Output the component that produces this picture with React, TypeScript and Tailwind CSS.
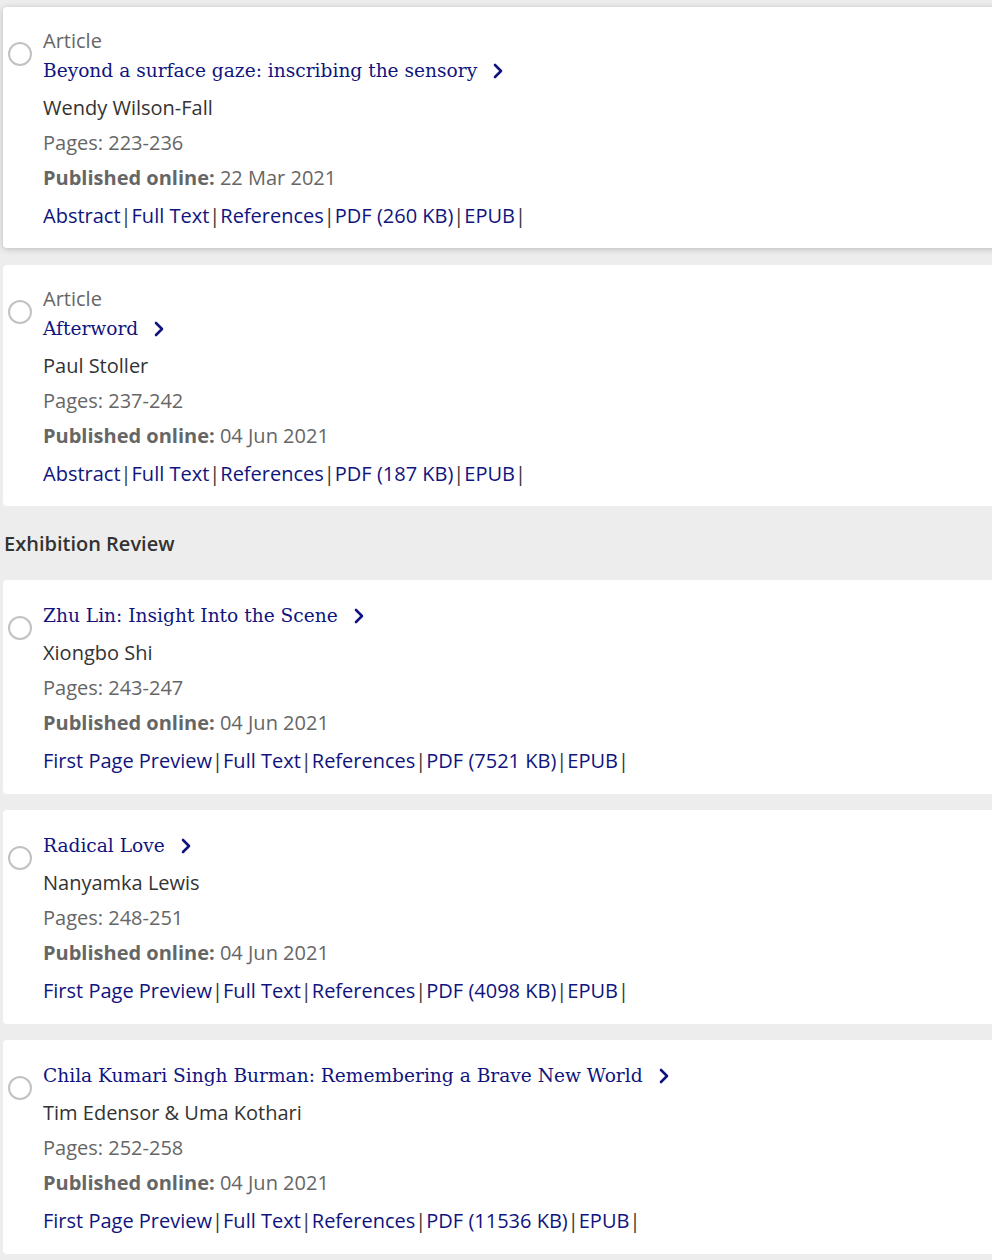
import { ChevronRight } from 'lucide-react';

type Item = {
    kind?: string;
    title: string;
    authors: string;
    pages: string;
    date: string;
    links: string[];
    raised?: boolean;
};

const articles: Item[] = [
    {
        kind: 'Article',
        title: 'Beyond a surface gaze: inscribing the sensory',
        authors: 'Wendy Wilson-Fall',
        pages: '223-236',
        date: '22 Mar 2021',
        links: ['Abstract', 'Full Text', 'References', 'PDF (260 KB)', 'EPUB'],
        raised: true,
    },
    {
        kind: 'Article',
        title: 'Afterword',
        authors: 'Paul Stoller',
        pages: '237-242',
        date: '04 Jun 2021',
        links: ['Abstract', 'Full Text', 'References', 'PDF (187 KB)', 'EPUB'],
    },
];

const reviews: Item[] = [
    {
        title: 'Zhu Lin: Insight Into the Scene',
        authors: 'Xiongbo Shi',
        pages: '243-247',
        date: '04 Jun 2021',
        links: ['First Page Preview', 'Full Text', 'References', 'PDF (7521 KB)', 'EPUB'],
    },
    {
        title: 'Radical Love',
        authors: 'Nanyamka Lewis',
        pages: '248-251',
        date: '04 Jun 2021',
        links: ['First Page Preview', 'Full Text', 'References', 'PDF (4098 KB)', 'EPUB'],
    },
    {
        title: 'Chila Kumari Singh Burman: Remembering a Brave New World',
        authors: 'Tim Edensor & Uma Kothari',
        pages: '252-258',
        date: '04 Jun 2021',
        links: ['First Page Preview', 'Full Text', 'References', 'PDF (11536 KB)', 'EPUB'],
    },
];

function Card({ item }: { item: Item }) {
    return (
        <div
            className={`flex w-[1010px] rounded bg-white pl-[5px] ${
                item.kind ? 'pt-[21px] pb-[14px]' : 'pt-[19px] pb-[15px]'
            } ${item.raised ? 'shadow-[0_1px_6px_rgba(0,0,0,0.22)]' : ''}`}
        >
            {/* Selection radio */}
            <div
                className={`h-6 w-6 shrink-0 rounded-full border-2 border-[#c2c2c2] bg-white ${
                    item.kind ? 'mt-[14px]' : 'mt-[17px]'
                }`}
            />
            <div className="ml-[11px] flex flex-col">
                {item.kind && <div className="text-[20px] leading-[26px] text-[#666]">{item.kind}</div>}
                <a className="mb-[5px] flex items-center pt-[1px] text-[18.6px] leading-[31px] text-[#10147e] [font-family:'DejaVu_Serif',serif]">
                    {item.title}
                    <ChevronRight className="ml-[9px] h-6 w-6" strokeWidth={2.6} />
                </a>
                <div className="text-[20px] leading-[34px] text-[#333]">{item.authors}</div>
                <div className="text-[20px] leading-[35px] text-[#666]">Pages: {item.pages}</div>
                <div className="text-[20px] leading-[35px] text-[#666]">
                    <span className="font-bold">Published online:</span> {item.date}
                </div>
                <div className="mt-[3px] flex text-[20px] leading-[36px] text-[#10147e]">
                    {item.links.map((l) => (
                        <span key={l} className="flex">
                            <a>{l}</a>
                            <span className="text-[#333]">|</span>
                        </span>
                    ))}
                </div>
            </div>
        </div>
    );
}

export default function App() {
    return (
        <div className="min-h-[1260px] w-[992px] overflow-hidden bg-[#ededed] pl-[3px] pt-[7px] [font-family:'Open_Sans',sans-serif]">
            <div className="flex flex-col gap-[17px]">
                {articles.map((a) => (
                    <Card key={a.title} item={a} />
                ))}
            </div>

            <h3 className="mb-[24px] mt-[26px] ml-[1px] text-[20px] font-semibold leading-[24px] text-[#333]">
                Exhibition Review
            </h3>

            <div className="flex flex-col gap-[16px]">
                {reviews.map((r) => (
                    <Card key={r.title} item={r} />
                ))}
            </div>
        </div>
    );
}
